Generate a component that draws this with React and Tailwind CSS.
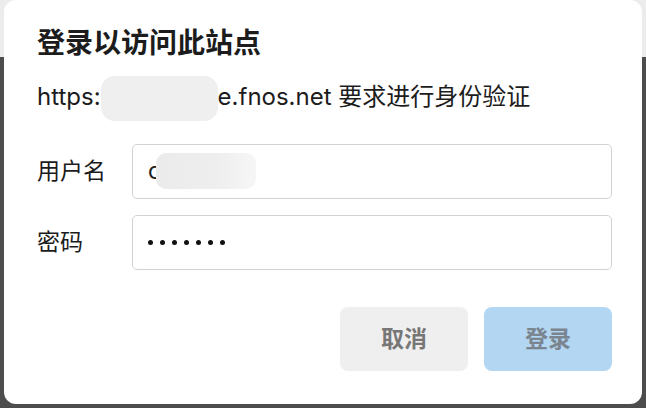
export default function App() {
  const dots = [0, 1, 2, 3, 4, 5, 6];

  return (
    <div
      className="w-[646px] h-[408px] px-[4px] pb-[4px] bg-[linear-gradient(to_bottom,#ececec_57px,#4d4d4d_57px)] overflow-hidden"
      style={{ fontFamily: 'Inter, "Noto Sans CJK SC", sans-serif' }}
    >
      <div className="h-[404px] bg-white rounded-[12px] pl-[33px] pr-[30px] pt-[27px] flex flex-col text-[#1c1c1c]">
        {/* Title */}
        <h1 className="text-[28px] leading-[32px] font-bold">登录以访问此站点</h1>

        {/* Origin line */}
        <p className="mt-[22px] text-[24px] leading-[32px] whitespace-nowrap">
          https:
          <span className="inline-block align-middle w-[117px] h-[45px] -my-[7px] rounded-[14px] bg-[#efefef]" />
          e.fnos.net 要求进行身份验证
        </p>

        {/* Username */}
        <div className="mt-[30px] flex items-center">
          <label className="w-[95px] text-[23px]">用户名</label>
          <div className="flex-1 h-[55px] border border-[#d2d2d2] rounded-[5px] flex items-center pl-[15px] text-[23px]">
            <span>c</span>
            <span className="-ml-[5px] w-[100px] h-[36px] rounded-[10px] bg-[linear-gradient(to_right,#ebebeb,#eeeeee_60%,#f6f6f6)]" />
          </div>
        </div>

        {/* Password */}
        <div className="mt-[16px] flex items-center">
          <label className="w-[95px] text-[23px]">密码</label>
          <div className="flex-1 h-[55px] border border-[#d2d2d2] rounded-[5px] flex items-center pl-[15px] gap-[7px]">
            {dots.map((d) => (
              <span key={d} className="w-[5px] h-[5px] rounded-full bg-[#111]" />
            ))}
          </div>
        </div>

        {/* Actions */}
        <div className="mt-[37px] flex justify-end gap-[16px]">
          <button className="w-[128px] h-[64px] rounded-[8px] bg-[#efefef] text-[#777] text-[23px] font-bold">
            取消
          </button>
          <button className="w-[128px] h-[64px] rounded-[8px] bg-[#b3d6f2] text-[#7b8590] text-[23px] font-bold">
            登录
          </button>
        </div>
      </div>
    </div>
  );
}
